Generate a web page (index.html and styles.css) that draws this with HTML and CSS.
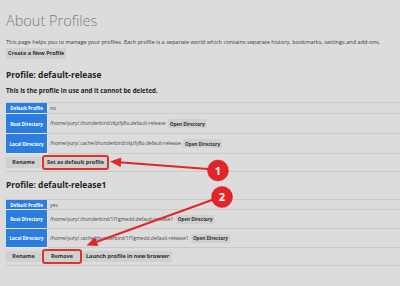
FILE: index.html
```html
<!DOCTYPE html>
<html lang="en">
<head>
<meta charset="utf-8">
<title>About Profiles</title>
<link rel="stylesheet" href="styles.css">
</head>
<body>
<main class="page">
  <h1 class="title">About Profiles</h1>
  <p class="intro">This page helps you to manage your profiles. Each profile is a separate world which contains separate history, bookmarks, settings and add-ons.</p>
  <button class="btn create">Create a New Profile</button>

  <section class="profile first">
    <h2 class="profile-name">Profile: default-release</h2>
    <h3 class="in-use">This is the profile in use and it cannot be deleted.</h3>
    <table class="info">
      <tr class="short"><th>Default Profile</th><td>no</td></tr>
      <tr><th>Root Directory</th><td>/home/yury/.thunderbird/zkjzfy8o.default-release <button class="btn small">Open Directory</button></td></tr>
      <tr><th>Local Directory</th><td>/home/yury/.cache/thunderbird/zkjzfy8o.default-release <button class="btn small">Open Directory</button></td></tr>
    </table>
    <div class="actions">
      <button class="btn wide">Rename</button>
      <button class="btn marked">Set as default profile</button>
    </div>
  </section>

  <section class="profile second">
    <h2 class="profile-name">Profile: default-release1</h2>
    <table class="info">
      <tr class="short"><th>Default Profile</th><td>yes</td></tr>
      <tr><th>Root Directory</th><td>/home/yury/.thunderbird/1f1gmedd.default-release1 <button class="btn small">Open Directory</button></td></tr>
      <tr><th>Local Directory</th><td>/home/yury/.cache/thunderbird/1f1gmedd.default-release1 <button class="btn small">Open Directory</button></td></tr>
    </table>
    <div class="actions">
      <button class="btn wide">Rename</button>
      <button class="btn marked remove">Remove</button>
      <button class="btn">Launch profile in new browser</button>
    </div>
  </section>

  <svg class="annot" width="400" height="286" viewBox="0 0 400 286" aria-hidden="true">
    <line x1="208" y1="169" x2="119" y2="162.3" class="arrow-line"/>
    <polygon points="110,161.6 121.3,157.4 120.7,167" class="arrow-head"/>
    <line x1="212" y1="200" x2="96" y2="242" class="arrow-line"/>
    <polygon points="86.5,245.5 98.4,246.1 95,237.1" class="arrow-head"/>
    <circle cx="218" cy="170.5" r="10.5" class="badge"/>
    <text x="218" y="174.5" class="badge-text">1</text>
    <circle cx="222" cy="197" r="10.5" class="badge"/>
    <text x="222" y="201" class="badge-text">2</text>
  </svg>
</main>
</body>
</html>
```

FILE: styles.css
```css
* { box-sizing: border-box; }

html, body {
  margin: 0;
  padding: 0;
  background: #dcdcdc;
}

body {
  font-family: "Open Sans", "Noto Sans", sans-serif;
  color: #333;
  width: 400px;
  height: 286px;
  overflow: hidden;
}

.page {
  position: relative;
  display: flow-root;
  padding-left: 6px;
  height: 286px;
}

.title {
  margin: 11px 0 0;
  font-size: 14.5px;
  line-height: 20px;
  font-weight: 300;
  color: #7a7a7a;
}

.intro {
  margin: 7px 0 0;
  font-size: 5.6px;
  line-height: 8px;
  color: #3a3a3a;
}

.btn {
  font-family: inherit;
  font-weight: 700;
  font-size: 5.5px;
  line-height: 7px;
  color: #2d2d2d;
  background: #d0d0d0;
  border: none;
  border-radius: 1px;
  padding: 2px 3px;
  margin: 0;
}

.btn.create {
  display: block;
  margin-top: 2px;
  padding: 2px 2px;
  height: 11px;
}

.profile-name {
  margin: 11px 0 0;
  font-size: 8.4px;
  line-height: 10px;
  font-weight: 700;
  color: #222;
}

.in-use {
  margin: 7px 0 0;
  font-size: 6.2px;
  line-height: 8px;
  font-weight: 700;
  color: #222;
}

.info {
  margin-top: 7px;
  width: 100%;
  border-collapse: separate;
  border-spacing: 0;
  border-top: 1px solid #c9c9c9;
}

.second .profile-name { margin-top: 8px; }
.second .info { margin-top: 9px; }

.info th {
  width: 42px;
  height: 20px;
  padding: 0 1px;
  background: #2c7de0;
  color: #fff;
  font-size: 4.5px;
  font-weight: 700;
  text-align: center;
  border-right: 1px solid #e6e6e6;
  border-bottom: 1px solid #e6e6e6;
}

.info td {
  height: 20px;
  padding: 0 0 0 2px;
  font-size: 5px;
  color: #444;
  border-bottom: 1px solid #c9c9c9;
  white-space: nowrap;
}

.second .info th,
.second .info td { height: 19px; }

.info tr.short th,
.info tr.short td { height: 11px; }

.second .info tr.short th,
.second .info tr.short td { height: 10px; }

.btn.small {
  font-size: 4.6px;
  line-height: 6px;
  padding: 1.5px 2px;
  margin-left: 1px;
  vertical-align: middle;
}

.actions {
  display: flex;
  align-items: center;
  gap: 2px;
  height: 18px;
  border-bottom: 1px solid #c9c9c9;
}

.btn.wide { min-width: 35px; }

.btn.marked {
  outline: 2px solid #e2302e;
  margin-left: 1px;
  margin-right: 1px;
}

.btn.remove { min-width: 36px; }

.annot {
  position: absolute;
  left: 0;
  top: 0;
  pointer-events: none;
}

.arrow-line {
  stroke: #e2262a;
  stroke-width: 2;
  stroke-linecap: round;
}

.arrow-head { fill: #e2262a; }

.badge {
  fill: #e3252b;
  stroke: #c81d22;
  stroke-width: 0.5;
}

.badge-text {
  fill: #fff;
  font-family: "Open Sans", sans-serif;
  font-size: 11px;
  font-weight: 700;
  text-anchor: middle;
}
```
